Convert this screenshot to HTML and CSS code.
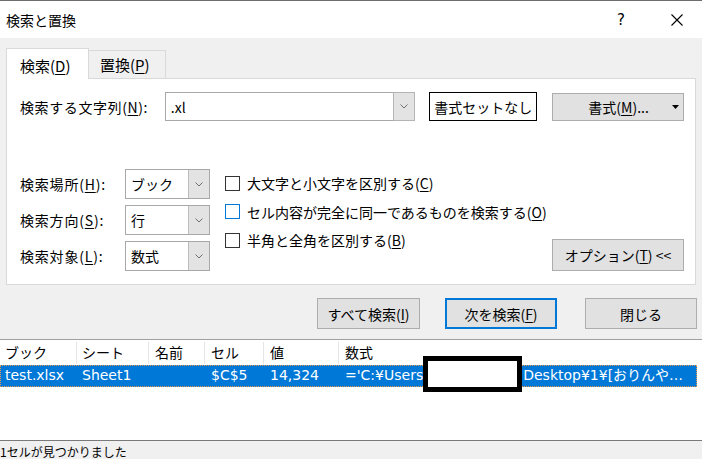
FILE: index.html
```
<!DOCTYPE html>
<html lang="ja">
<head>
<meta charset="utf-8">
<title>検索と置換</title>
<link rel="stylesheet" href="styles.css">
</head>
<body>
<header class="titlebar">
  <span class="title">検索と置換</span>
  <span class="help">?</span>
  <svg class="close" width="12" height="12" viewBox="0 0 12 12"><path d="M0.5 0.5L11.5 11.5M11.5 0.5L0.5 11.5" stroke="#000" stroke-width="1.1" fill="none"/></svg>
</header>
<main class="dialog">
  <div class="tabs">
    <div class="tab tab-active">検索(<u>D</u>)</div>
    <div class="tab">置換(<u>P</u>)</div>
  </div>
  <section class="panel">
    <div class="find-row">
      <span class="find-label">検索する文字列(<u>N</u>):</span>
      <div class="combo combo-find">
        <span class="combo-value">.xl</span>
        <span class="combo-btn"><svg width="8" height="5" viewBox="0 0 8 5"><polyline points="0.5,0.5 4,4 7.5,0.5" stroke="#707070" fill="none"/></svg></span>
      </div>
      <button class="btn btn-plain">書式セットなし</button>
      <button class="btn btn-format"><span class="btn-text">書式(<u>M</u>)...</span><svg class="caret" width="7" height="4" viewBox="0 0 7 4"><path d="M0 0H7L3.5 4Z" fill="#000"/></svg></button>
    </div>
    <div class="options">
      <div class="selects">
        <div class="sel-row">
          <span class="sel-label">検索場所(<u>H</u>):</span>
          <div class="combo combo-small"><span class="combo-value">ブック</span><span class="combo-btn"><svg width="8" height="5" viewBox="0 0 8 5"><polyline points="0.5,0.5 4,4 7.5,0.5" stroke="#707070" fill="none"/></svg></span></div>
        </div>
        <div class="sel-row">
          <span class="sel-label">検索方向(<u>S</u>):</span>
          <div class="combo combo-small"><span class="combo-value">行</span><span class="combo-btn"><svg width="8" height="5" viewBox="0 0 8 5"><polyline points="0.5,0.5 4,4 7.5,0.5" stroke="#707070" fill="none"/></svg></span></div>
        </div>
        <div class="sel-row">
          <span class="sel-label">検索対象(<u>L</u>):</span>
          <div class="combo combo-small"><span class="combo-value">数式</span><span class="combo-btn"><svg width="8" height="5" viewBox="0 0 8 5"><polyline points="0.5,0.5 4,4 7.5,0.5" stroke="#707070" fill="none"/></svg></span></div>
        </div>
      </div>
      <div class="checks">
        <div class="check"><span class="box"></span>大文字と小文字を区別する(<u>C</u>)</div>
        <div class="check"><span class="box box-focus"></span>セル内容が完全に同一であるものを検索する(<u>O</u>)</div>
        <div class="check"><span class="box"></span>半角と全角を区別する(<u>B</u>)</div>
      </div>
      <button class="btn btn-options">オプション(<u>T</u>) &lt;&lt;</button>
    </div>
  </section>
  <div class="actions">
    <button class="btn btn-action btn-all">すべて検索(<u>I</u>)</button>
    <button class="btn btn-action btn-default">次を検索(<u>F</u>)</button>
    <button class="btn btn-action">閉じる</button>
  </div>
</main>
<section class="results">
  <div class="res-grid res-head">
    <span class="cell">ブック</span>
    <span class="cell">シート</span>
    <span class="cell">名前</span>
    <span class="cell">セル</span>
    <span class="cell">値</span>
    <span class="cell cell-last">数式</span>
  </div>
  <div class="res-grid res-row selected">
    <span class="cell">test.xlsx</span>
    <span class="cell">Sheet1</span>
    <span class="cell"></span>
    <span class="cell">$C$5</span>
    <span class="cell">14,324</span>
    <span class="cell cell-last">='C:¥Users<span class="masked"></span>Desktop¥1¥[おりんや…</span>
  </div>
  <div class="redaction"></div>
</section>
<footer class="status">1セルが見つかりました</footer>
</body>
</html>
```
FILE: styles.css
```
* { box-sizing: border-box; }

body {
  margin: 0;
  width: 702px;
  height: 473px;
  overflow: hidden;
  background: #fff;
  color: #000;
  font-family: "Noto Sans CJK JP", "DejaVu Sans", sans-serif;
  font-size: 14px;
}

u { text-decoration: underline; text-underline-offset: 2px; }

/* title bar */
.titlebar {
  height: 38px;
  border-top: 1px solid #6d6d6d;
  background: #fff;
  display: flex;
  align-items: center;
  padding: 0 19px 0 6px;
}
.title { flex: 1; font-size: 14px; }
.help { font-size: 15px; margin-right: 46px; font-family: "DejaVu Sans", sans-serif; }
.close { display: block; }

/* dialog body */
.dialog {
  background: #f0f0f0;
  padding: 10px 6px 10px 6px;
  border-bottom: 1px solid #a0a0a0;
}

.tabs {
  display: flex;
  align-items: flex-end;
  height: 30px;
}
.tab {
  height: 28px;
  width: 77px;
  padding: 4px 0 0 11px;
  line-height: 20px;
  font-size: 15px;
  border: 1px solid #d9d9d9;
  border-bottom: none;
  border-left: none;
  background: #f0f0f0;
}
.tab-active {
  position: relative;
  z-index: 1;
  width: 83px;
  height: 31px;
  margin-bottom: -1px;
  padding: 7px 0 0 13px;
  border-left: 1px solid #d9d9d9;
  background: #fff;
}

.panel {
  background: #fff;
  border: 1px solid #d9d9d9;
  padding: 13px 11px 13px 13px;
}

.find-row {
  display: flex;
  align-items: center;
  height: 29px;
}
.find-label { width: 145px; letter-spacing: 0.6px; }

.combo {
  display: flex;
  align-items: stretch;
  border: 1px solid #a8a8a8;
  background: #fff;
}
.combo-value {
  flex: 1;
  display: flex;
  align-items: center;
  padding-left: 5px;
  white-space: nowrap;
}
.combo-btn {
  width: 21px;
  display: flex;
  align-items: center;
  justify-content: center;
  background: #e3e3e3;
  border-left: 1px solid #bcbcbc;
}
.combo-find { width: 251px; height: 29px; }
.combo-find .combo-btn { border: 1px solid #b4b4b4; margin: -1px -1px -1px 0; width: 22px; }
.combo-small { width: 85px; height: 30px; }

.btn {
  font-family: inherit;
  font-size: 14px;
  color: #000;
  background: #e1e1e1;
  border: 1px solid #adadad;
  padding: 0;
  margin: 0;
}
.btn-plain {
  margin-left: 14px;
  width: 108px;
  height: 29px;
  background: #fff;
  border-color: #000;
}
.btn-format {
  margin-left: 15px;
  width: 132px;
  height: 28px;
  display: flex;
  align-items: center;
  padding: 0 4px 0 12px;
}
.btn-text { flex: 1; text-align: center; }
.caret { display: block; }

.options {
  display: flex;
  margin-top: 48px;
  height: 102px;
}
.selects {
  display: flex;
  flex-direction: column;
  gap: 6px;
}
.sel-row {
  display: flex;
  align-items: center;
  height: 30px;
}
.sel-label { width: 105px; letter-spacing: 0.8px; }

.checks {
  margin-left: 15px;
  display: flex;
  flex-direction: column;
}
.check {
  height: 28.5px;
  display: flex;
  align-items: center;
  white-space: nowrap;
}
.box {
  width: 15px;
  height: 15px;
  border: 1px solid #333;
  background: #fff;
  margin-right: 7px;
  flex: none;
}
.box-focus { border-color: #0078d7; }

.btn-options {
  margin-left: auto;
  align-self: flex-end;
  width: 132px;
  height: 32px;
}

.actions {
  display: flex;
  justify-content: flex-end;
  gap: 25px;
  margin-top: 13px;
  margin-right: -1px;
}
.btn-action { width: 112px; height: 31px; }
.btn-all { width: 103px; }
.btn-default { border: 2px solid #0078d7; margin-right: 3px; }

/* results list */
.results {
  position: relative;
  height: 100px;
  padding-right: 5px;
  background: #fff;
  font-family: "DejaVu Sans", "Noto Sans CJK JP", sans-serif;
  font-size: 14px;
}
.res-grid {
  display: grid;
  grid-template-columns: 77px 72px 56px 59px 75px 1fr;
}
.res-head {
  height: 25px;
  padding: 2px 0 1px;
  font-family: "Noto Sans CJK JP", sans-serif;
}
.res-head .cell {
  border-right: 1px solid #e5e5e5;
  line-height: 20px;
}
.res-head .cell-last { border-right: none; }
.cell {
  padding-left: 5px;
  white-space: nowrap;
}
.res-head .cell:nth-child(n+3) { padding-left: 6px; }
.res-row {
  height: 22px;
  line-height: 21px;
}
.res-row .cell:nth-child(n+3) { padding-left: 6px; }
.res-row .cell-last { padding-left: 2px; }
.selected {
  background: #0078d7;
  color: #fff;
  outline: 1px dotted #e89a50;
  outline-offset: -1px;
}
.masked {
  display: inline-block;
  width: 100px;
}
.redaction {
  position: absolute;
  left: 423px;
  top: 16px;
  width: 99px;
  height: 36px;
  border: 5px solid #000;
  background: #fff;
}

.status {
  height: 19px;
  border-top: 1px solid #7a7a7a;
  background: #f0f0f0;
  overflow: hidden;
  font-size: 12px;
  line-height: 16px;
  padding-top: 3px;
}
```
